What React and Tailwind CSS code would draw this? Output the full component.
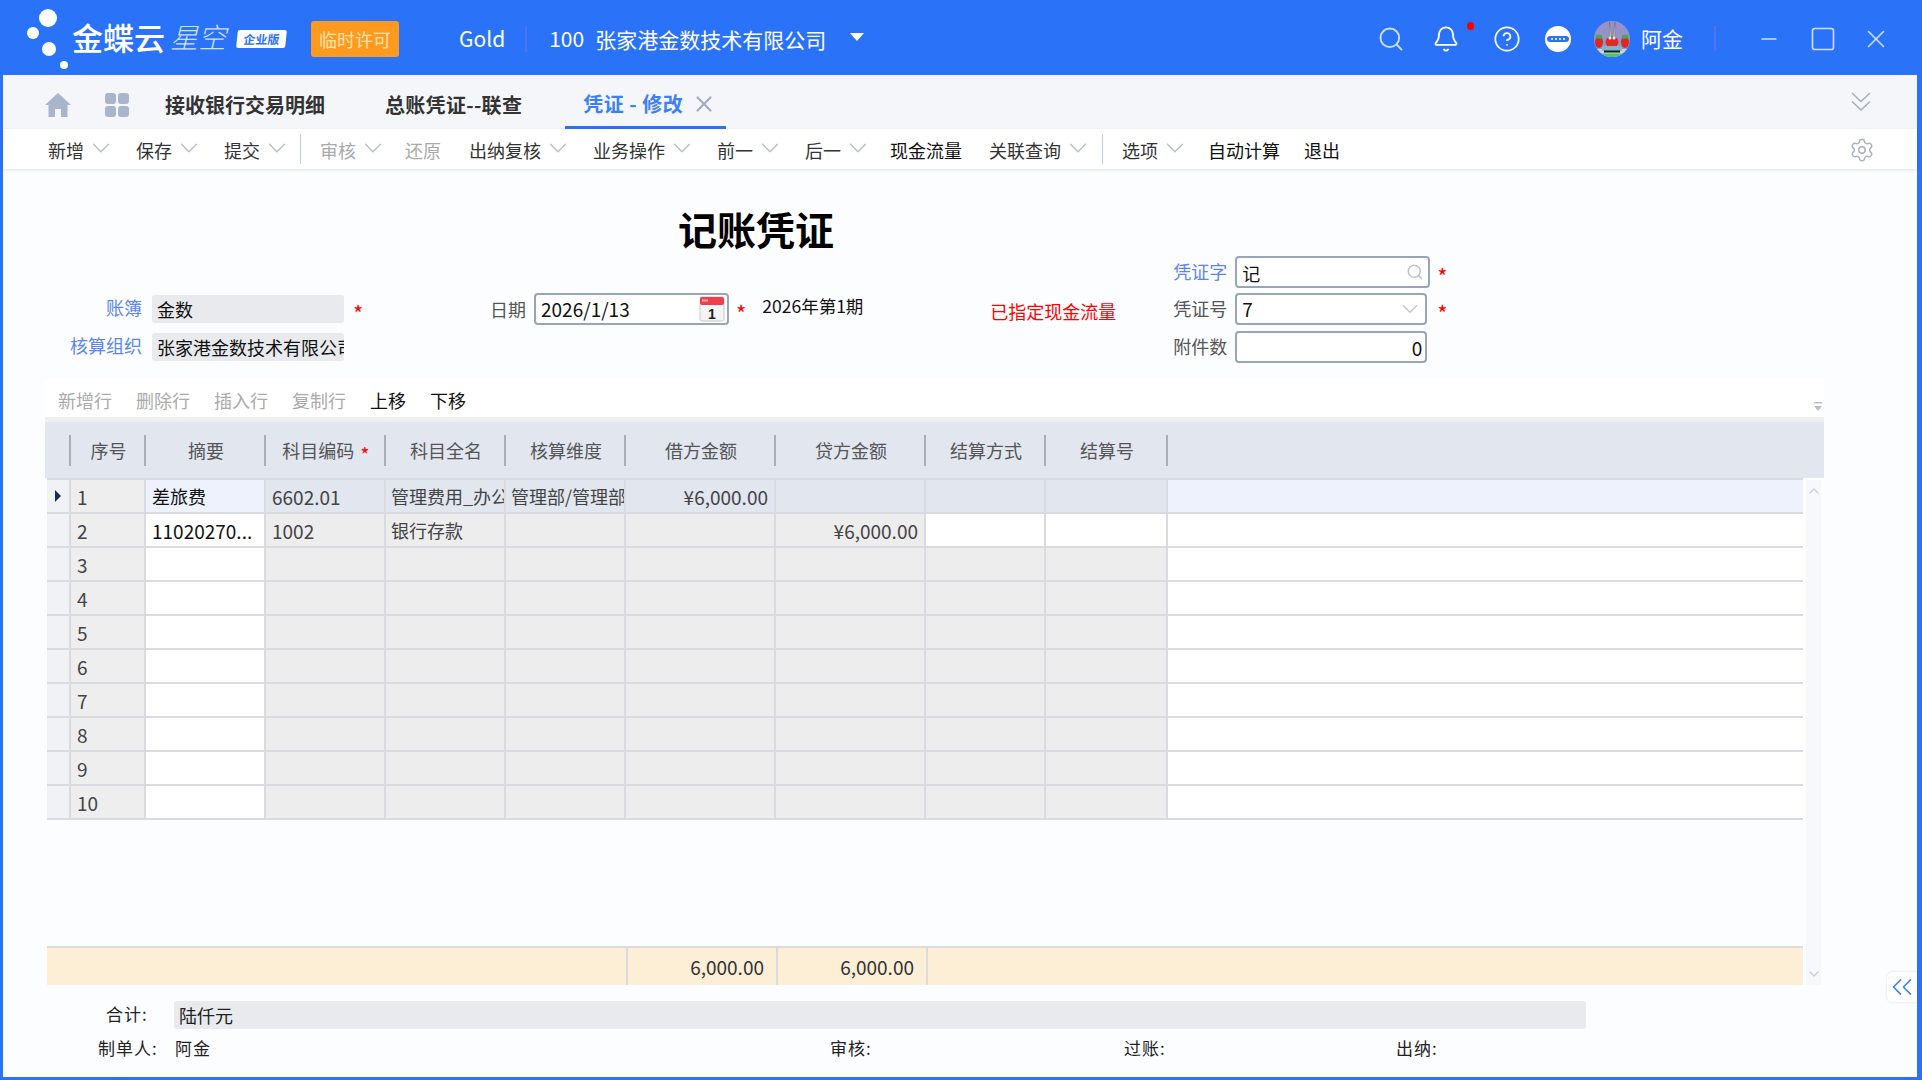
import React from "react";
import { Search, Bell, CircleHelp, ChevronDown, ChevronUp, ChevronsLeft, Settings, X, Minus, Square } from "lucide-react";

const tools = [
  { t: "新增", c: 1, cls: "ml-[45px]", txt: "text-[#333]" },
  { t: "保存", c: 1, cls: "ml-[27px]", txt: "text-[#333]" },
  { t: "提交", c: 1, cls: "ml-[27px]", txt: "text-[#333]" },
  { sep: 1, cls: "ml-[15px]" },
  { t: "审核", c: 1, cls: "ml-[19px]", txt: "text-[#aaa]" },
  { t: "还原", c: 0, cls: "ml-[24px]", txt: "text-[#aaa]" },
  { t: "出纳复核", c: 1, cls: "ml-[28px]", txt: "text-[#333]" },
  { t: "业务操作", c: 1, cls: "ml-[27px]", txt: "text-[#333]" },
  { t: "前一", c: 1, cls: "ml-[27px]", txt: "text-[#333]" },
  { t: "后一", c: 1, cls: "ml-[27px]", txt: "text-[#333]" },
  { t: "现金流量", c: 0, cls: "ml-[24px]", txt: "text-[#111]" },
  { t: "关联查询", c: 1, cls: "ml-[27px]", txt: "text-[#333]" },
  { sep: 1, cls: "ml-[16px]" },
  { t: "选项", c: 1, cls: "ml-[19px]", txt: "text-[#333]" },
  { t: "自动计算", c: 0, cls: "ml-[25px]", txt: "text-[#111]" },
  { t: "退出", c: 0, cls: "ml-[24px]", txt: "text-[#111]" },
];

const headers = [
  ["", "w-[24px]"],
  ["序号", "w-[75px]"],
  ["摘要", "w-[120px]"],
  ["科目编码", "w-[120px]", true],
  ["科目全名", "w-[120px]"],
  ["核算维度", "w-[120px]"],
  ["借方金额", "w-[150px]"],
  ["贷方金额", "w-[150px]"],
  ["结算方式", "w-[120px]"],
  ["结算号", "w-[122px]"],
];

const widths = headers.map((h) => h[1]);

const rowData = [
  ["差旅费", "6602.01", "管理费用_办公费", "管理部/管理部门", "¥6,000.00", ""],
  ["11020270...", "1002", "银行存款", "", "", "¥6,000.00"],
];

function cellBg(r, c) {
  if (c === 0) return "bg-[#f1f2f5]";
  if (c === 1) return "bg-[#eeeeee]";
  if (r === 0) return c === 2 ? "bg-[#edf2fd]" : "bg-[#e1e6ef]";
  if (c === 2) return "bg-white";
  if (r === 1 && c >= 8) return "bg-white";
  return "bg-[#ededed]";
}

function Row({ r }) {
  const d = rowData[r] || [];
  const vals = ["", String(r + 1), d[0] || "", d[1] || "", d[2] || "", d[3] || "", d[4] || "", d[5] || "", "", ""];
  return (
    <div className="flex h-[34px]">
      {vals.map((v, c) => {
        const right = c === 6 || c === 7;
        const black = c === 2;
        const num = c === 1 || c === 3 || right || (c === 2 && r === 1);
        return (
          <div
            key={c}
            className={`${widths[c]} ${cellBg(r, c)} shrink-0 border-r-2 border-b-2 border-[#d9dbe0] flex items-center overflow-hidden whitespace-nowrap leading-none ${
              right ? "justify-end pr-[6px]" : c === 1 ? "pl-[6px]" : c === 2 || c === 3 ? "pl-[6px]" : "pl-[5px]"
            } ${num ? "text-[19px]" : "text-[18px]"} ${black ? "text-[#111]" : "text-[#444]"}`}
          >
            {c === 0 && r === 0 ? (
              <span className="ml-[3px] w-0 h-0 border-y-[6px] border-y-transparent border-l-[6px] border-l-[#12305f]" />
            ) : (
              v
            )}
          </div>
        );
      })}
      <div className={`flex-1 border-b-2 border-[#d9dbe0] ${r === 0 ? "bg-[#edf2fd]" : "bg-white"}`} />
    </div>
  );
}

function Star() {
  return <span className="inline-block text-[#f00] text-[22px] leading-none h-[12px] translate-y-[3px]">*</span>;
}

function Avatar() {
  return (
    <svg width="36" height="36" viewBox="0 0 36 36">
      <defs>
        <clipPath id="av"><circle cx="18" cy="18" r="18" /></clipPath>
      </defs>
      <g clipPath="url(#av)">
        <rect width="36" height="36" fill="#9492c8" />
        <rect y="28" width="36" height="8" fill="#c9d6dc" />
        <path d="M15.5 1 L17.2 16 L15.5 16 Z M21 1 L20.6 16 L19 16 Z" fill="#d8f0c4" stroke="#4a6a3a" strokeWidth="0.4" />
        <ellipse cx="18" cy="21" rx="6.5" ry="5.5" fill="#e02a25" />
        <circle cx="16" cy="17" r="1.5" fill="#fff" />
        <circle cx="20" cy="17" r="1.5" fill="#fff" />
        <rect x="8" y="25" width="20" height="5" rx="1" fill="#7fb4cf" />
        <rect x="10" y="29.5" width="16" height="2" fill="#1c1c1c" />
        <ellipse cx="5" cy="21" rx="4" ry="6" fill="#d92a22" />
        <ellipse cx="31" cy="21" rx="4" ry="6" fill="#d92a22" />
        <rect x="2" y="14" width="6" height="3.5" fill="#3cae4a" />
        <rect x="28" y="14" width="6" height="3.5" fill="#3cae4a" />
        <rect x="5" y="32.5" width="26" height="3.5" fill="#4cc85a" />
      </g>
    </svg>
  );
}

function CalendarIcon() {
  return (
    <svg width="26" height="26" viewBox="0 0 26 26">
      <rect x="1" y="1" width="24" height="24" rx="2" fill="#f4f4f4" stroke="#c9c9c9" />
      <rect x="1" y="1" width="24" height="8" rx="2" fill="#ef3f4a" />
      <rect x="3" y="3.5" width="6" height="2" fill="#ffb3b3" />
      <text x="13" y="22.5" fontSize="14" fontWeight="700" textAnchor="middle" fill="#222" fontFamily="Liberation Sans, sans-serif">1</text>
    </svg>
  );
}

export default function App() {
  return (
    <div className="w-full h-screen overflow-hidden bg-[#2a72f8] flex flex-col font-['Noto_Sans_CJK_SC','Noto_Sans',sans-serif]">
      {/* Title bar */}
      <div className="h-[75px] shrink-0 flex items-center text-white">
        <svg width="72" height="75" viewBox="0 0 72 75" className="shrink-0">
          <circle cx="48" cy="18" r="9" fill="#fff" />
          <circle cx="33" cy="33" r="6" fill="#fff" />
          <circle cx="49" cy="49" r="7" fill="#fff" />
          <circle cx="64" cy="65" r="4" fill="#fff" />
        </svg>
        <span className="-mt-[3px] text-[31px] font-medium leading-none">金蝶云</span>
        <span className="-mt-[3px] ml-[5px] text-[28px] italic font-light leading-none text-[#cfe0ff]">星空</span>
        <span className="mt-[2px] ml-[11px] w-[49px] h-[18px] bg-white -skew-x-6 rounded-[2px] flex items-center justify-center text-[#2a72f8] text-[12px] font-bold leading-none whitespace-nowrap">企业版</span>
        <span className="mt-[3px] ml-[25px] w-[88px] h-[36px] rounded-[3px] bg-[#ff9a1f] flex items-center justify-center text-[#ffe3ad] text-[18px] leading-none">临时许可</span>
        <span className="mt-[2px] ml-[60px] text-[21px] leading-none">Gold</span>
        <span className="mt-[3px] ml-[20px] w-[2px] h-[25px] bg-[#5a70e6]" />
        <span className="mt-[2px] ml-[22px] text-[21px] leading-none">100</span>
        <span className="mt-[3px] ml-[11px] text-[21px] leading-none">张家港金数技术有限公司</span>
        <span className="ml-[24px] -mt-[2px] w-0 h-0 border-x-[7px] border-x-transparent border-t-[8px] border-t-white" />
        <div className="ml-auto mr-[31px] mt-[2px] flex items-center">
          <Search size={28} strokeWidth={1.6} className="text-[#cfe0ff]" />
          <div className="relative ml-[27px]">
            <Bell size={28} strokeWidth={1.6} className="text-white" />
            <span className="absolute -top-[3px] -right-[14px] w-[7px] h-[8px] rounded-full bg-[#f00]" />
          </div>
          <CircleHelp size={28} strokeWidth={1.5} className="ml-[33px] text-white" />
          <div className="ml-[24px] w-[26px] h-[26px] rounded-full bg-white flex items-center justify-center">
            <span className="w-[22px] h-[6px] rounded-full bg-[#2a72f8] flex items-center justify-center gap-[2px]">
              <i className="w-[2px] h-[2px] bg-[#cfe0ff]" />
              <i className="w-[2px] h-[2px] bg-[#cfe0ff]" />
              <i className="w-[2px] h-[2px] bg-[#cfe0ff]" />
              <i className="w-[2px] h-[2px] bg-[#cfe0ff]" />
            </span>
          </div>
          <div className="ml-[23px]"><Avatar /></div>
          <span className="ml-[11px] text-[21px] leading-none">阿金</span>
          <span className="ml-[31px] w-[2px] h-[25px] bg-[#5a70e6]" />
          <Minus size={24} strokeWidth={1.5} className="ml-[41px] text-[#cfe0ff]" />
          <Square size={28} strokeWidth={1.4} className="ml-[28px] text-[#cfe0ff]" />
          <X size={30} strokeWidth={1.3} className="ml-[24px] text-[#cfe0ff]" />
        </div>
      </div>

      {/* Window content */}
      <div className="relative flex-1 min-h-0 ml-[3px] mr-[5px] mb-[3px] bg-[#fcfdff] flex flex-col">
        {/* Tabs */}
        <div className="h-[54px] shrink-0 bg-[#f5f6fa] flex items-center">
          <svg width="26" height="24" viewBox="0 0 26 24" className="mt-[5px] ml-[42px] shrink-0" fill="#a8b5cd">
            <path d="M13 0 L26 12 L22.5 12 L22.5 24 L16 24 L16 16 L10 16 L10 24 L3.5 24 L3.5 12 L0 12 Z" />
          </svg>
          <svg width="24" height="24" viewBox="0 0 24 24" className="mt-[5px] ml-[34px] shrink-0" fill="#a8b5cd">
            <rect x="0" y="0" width="11" height="11" rx="3" />
            <rect x="13" y="0" width="11" height="11" rx="3" />
            <rect x="0" y="13" width="11" height="11" rx="3" />
            <rect x="13" y="13" width="11" height="11" rx="3" />
          </svg>
          <span className="mt-[6px] ml-[36px] text-[20px] font-bold text-[#333] leading-none whitespace-nowrap">接收银行交易明细</span>
          <span className="mt-[6px] ml-[60px] text-[20px] font-bold text-[#333] leading-none whitespace-nowrap tracking-[0.3px]">总账凭证--联查</span>
          <div className="ml-[43px] w-[161px] h-full border-b-[3px] border-[#2a72f8] flex items-center pl-[18px] pt-[6px]">
            <span className="text-[20px] font-bold text-[#3b80f5] leading-none whitespace-nowrap tracking-[0.5px]">凭证 - 修改</span>
            <X size={26} strokeWidth={2} className="ml-[8px] shrink-0 text-[#a4adc0]" />
          </div>
          <svg width="20" height="20" viewBox="0 0 20 20" className="ml-auto mr-[46px] shrink-0" fill="none" stroke="#a4adbd" strokeWidth="1.5">
            <path d="M1 1 L10 9.5 L19 1 M1 9.5 L10 18 L19 9.5" />
          </svg>
        </div>

        {/* Toolbar */}
        <div className="h-[40px] shrink-0 bg-white flex items-center shadow-[0_1px_3px_rgba(0,0,0,0.12)] text-[18px] leading-none whitespace-nowrap">
          {tools.map((it, i) =>
            it.sep ? (
              <span key={i} className={`${it.cls} w-[1px] h-[30px] bg-[#c3cddd]`} />
            ) : (
              <div key={i} className={`${it.cls} flex items-center`}>
                <span className={`${it.txt} mt-[2px]`}>{it.t}</span>
                {it.c ? <ChevronDown size={30} strokeWidth={1.1} className="ml-[2px] -mr-[7px] -mt-[3px] shrink-0 text-[#b5bccc]" /> : null}
              </div>
            )
          )}
          <Settings size={26} strokeWidth={1.4} className="ml-auto mr-[42px] mt-[2px] text-[#aab3c2]" />
        </div>

        {/* Voucher title */}
        <div className="h-[87px] shrink-0 pt-[39px] pl-[675px]">
          <div className="text-[39px] font-bold text-black leading-[40px] whitespace-nowrap">记账凭证</div>
        </div>

        {/* Form */}
        <div className="h-[123px] shrink-0 flex items-start text-[18px] leading-none whitespace-nowrap">
          <div className="w-[357px] shrink-0 pt-[39px] flex flex-col gap-[10px]">
            <div className="flex items-center h-[28px]">
              <span className="w-[139px] shrink-0 text-right text-[#5b86ec] -mt-[4px]">账簿</span>
              <div className="ml-[10px] w-[192px] shrink-0 h-full bg-[#e8eaee] rounded-[3px] pl-[5px] flex items-center text-[#111]">金数</div>
              <span className="ml-[9px] shrink-0"><Star /></span>
            </div>
            <div className="flex items-center h-[28px]">
              <span className="w-[139px] shrink-0 text-right text-[#5b86ec] -mt-[4px]">核算组织</span>
              <div className="ml-[10px] w-[192px] shrink-0 h-full bg-[#e8eaee] rounded-[3px] pl-[5px] flex items-center text-[#111] overflow-hidden">张家港金数技术有限公司</div>
            </div>
          </div>
          <div className="ml-[130px] pt-[37px] flex items-center shrink-0">
            <span className="text-[#555]">日期</span>
            <div className="ml-[8px] w-[195px] h-[32px] border-2 border-[#98a4b8] rounded-[4px] bg-white flex items-center pl-[5px] pr-[2px] text-[19px] text-[#111]">
              <span className="-mt-[2px]">2026/1/13</span>
              <span className="ml-auto"><CalendarIcon /></span>
            </div>
            <span className="ml-[7px]"><Star /></span>
            <span className="ml-[16px] text-[#111] text-[17.5px] -mt-[6px]">2026年第1期</span>
          </div>
          <div className="ml-[127px] pt-[46px] text-[#f00] shrink-0">已指定现金流量</div>
          <div className="ml-[57px] flex flex-col shrink-0">
            <div className="flex items-center h-[32px]">
              <span className="w-[54px] text-[#5b86ec] -mt-[3px]">凭证字</span>
              <div className="ml-[8px] w-[195px] h-full border-2 border-[#98a4b8] rounded-[4px] bg-white flex items-center pl-[5px] pr-[4px] text-[#111]">
                <span className="mt-[1px]">记</span>
                <Search size={18} strokeWidth={2} className="ml-auto text-[#bcc3d0]" />
              </div>
              <span className="ml-[7px]"><Star /></span>
            </div>
            <div className="flex items-center h-[32px] mt-[5px]">
              <span className="w-[54px] text-[#555] -mt-[2px]">凭证号</span>
              <div className="ml-[8px] w-[192px] h-full border-2 border-[#98a4b8] rounded-[4px] bg-white flex items-center pl-[5px] pr-[2px] text-[19px] text-[#111]">
                <span className="-mt-[2px]">7</span>
                <ChevronDown size={26} strokeWidth={1.3} className="ml-auto text-[#bcc3d0]" />
              </div>
              <span className="ml-[10px]"><Star /></span>
            </div>
            <div className="flex items-center h-[32px] mt-[6px]">
              <span className="w-[54px] text-[#555] -mt-[2px]">附件数</span>
              <div className="ml-[8px] w-[192px] h-full border-2 border-[#98a4b8] rounded-[4px] bg-white flex items-center justify-end pr-[3px] text-[19px] text-[#111]">0</div>
            </div>
          </div>
        </div>

        {/* Grid panel */}
        <div className="ml-[42px] w-[1779px] shrink-0">
          <div className="h-[38px] bg-white flex items-center pl-[13px] pt-[4px] gap-[24px] text-[18px] leading-none whitespace-nowrap">
            <span className="text-[#aaa]">新增行</span>
            <span className="text-[#aaa]">删除行</span>
            <span className="text-[#aaa]">插入行</span>
            <span className="text-[#aaa]">复制行</span>
            <span className="text-[#111]">上移</span>
            <span className="text-[#111]">下移</span>
            <svg width="8" height="10" viewBox="0 0 8 10" className="ml-auto mr-[2px] mt-[14px] shrink-0" fill="#b8bec9">
              <rect x="0" y="0" width="8" height="1.5" />
              <path d="M0 4 L8 4 L4 9 Z" />
            </svg>
          </div>
          <div className="h-[5px] bg-[#efefef]" />
          <div className="h-[56px] bg-[#e1e6ef] pl-[2px] pt-[13px] flex items-start text-[18px] leading-none text-[#555]">
            {headers.map(([t, w, star], i) => (
              <div key={i} className={`${w} h-[31px] shrink-0 border-r-2 border-[#a9aeb8] flex items-center justify-center pl-[2px] -mt-[0.5px]`}>
                {t}
                {star ? <span className="ml-[6px] text-[#f00] text-[20px] h-[10px] leading-none">*</span> : null}
              </div>
            ))}
          </div>
          <div className="h-[507px] flex pl-[2px]">
            <div className="w-[1756px] shrink-0 flex flex-col border-t-2 border-[#d9dbe0]">
              {[0, 1, 2, 3, 4, 5, 6, 7, 8, 9].map((r) => (
                <Row key={r} r={r} />
              ))}
              <div className="flex-1" />
              <div className="h-[39px] shrink-0 border-t-2 border-[#d9dbe0] bg-[#fdefd6] flex text-[19px] leading-none text-[#333]">
                <div className="w-[581px] shrink-0 border-r-2 border-[#d9dbe0]" />
                <div className="w-[150px] shrink-0 border-r-2 border-[#d9dbe0] flex items-center justify-end pr-[12px]">6,000.00</div>
                <div className="w-[150px] shrink-0 border-r-2 border-[#d9dbe0] flex items-center justify-end pr-[12px]">6,000.00</div>
              </div>
            </div>
            <div className="ml-[3px] mt-[2px] w-[15px] bg-[#f7f8fc] flex flex-col items-center justify-between py-[3px]">
              <ChevronUp size={16} strokeWidth={1.8} className="text-[#c8cdd6]" />
              <ChevronDown size={16} strokeWidth={1.8} className="text-[#c8cdd6]" />
            </div>
          </div>
        </div>

        {/* Footer */}
        <div className="mt-[16px] flex items-center h-[28px] text-[17px] leading-none text-[#222] whitespace-nowrap">
          <span className="ml-[103px] w-[68px] -mt-[4px] tracking-[1px]">合计:</span>
          <div className="w-[1412px] h-full bg-[#e8eaee] rounded-[3px] pl-[5px] flex items-center text-[18px] text-[#222]">陆仟元</div>
        </div>
        <div className="mt-[5px] flex items-center text-[17px] leading-none text-[#222] whitespace-nowrap h-[26px] tracking-[1px]">
          <span className="ml-[95px] w-[77px]">制单人:</span>
          <span className="w-[655px]">阿金</span>
          <span className="w-[294px]">审核:</span>
          <span className="w-[272px]">过账:</span>
          <span>出纳:</span>
        </div>

        {/* Collapsed side handle */}
        <div className="absolute right-0 top-[897px] w-[30px] h-[30px] bg-white rounded-l-[6px] flex items-center justify-center shadow-[0_0_3px_rgba(0,0,0,0.12)]">
          <ChevronsLeft size={34} strokeWidth={1.1} className="shrink-0 text-[#3b80f5]" />
        </div>
      </div>
    </div>
  );
}
